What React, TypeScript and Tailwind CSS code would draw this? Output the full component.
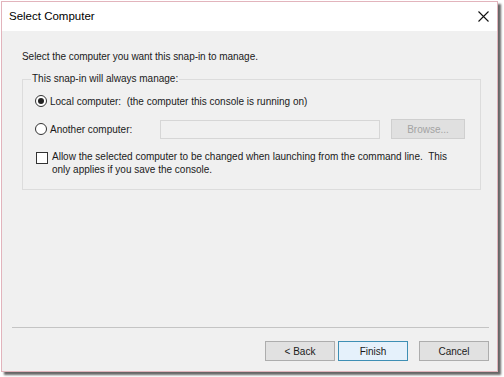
import React from "react";

export default function App() {
  const font = { fontFamily: '"Liberation Sans", Arial, sans-serif' };
  return (
    <div className="w-[504px] h-[377px] bg-white overflow-hidden" style={font}>
      <div className="ml-[1px] mt-[1px] w-[497px] h-[371px] border border-[#e2b4bc] bg-[#f0f0f0] shadow-[3px_3px_2px_rgba(0,0,0,0.6)] flex flex-col text-[10px] text-[#1a1a1a]">
        <div className="h-[29px] bg-white flex items-center justify-between pl-[7px] pr-[6px] shrink-0">
          <span className="text-[11.5px] text-black">Select Computer</span>
          <svg width="11" height="11" viewBox="0 0 11 11" className="mr-[2px]">
            <path d="M0.5 0.5 L10.5 10.5 M10.5 0.5 L0.5 10.5" stroke="#111" strokeWidth="1.1" fill="none" />
          </svg>
        </div>
        <div className="flex-1 flex flex-col">
          <div className="ml-[20px] mt-[19px] leading-[14px] tracking-[-0.05px]">Select the computer you want this snap-in to manage.</div>
          <fieldset className="ml-[20px] mr-[16px] mt-[8px] border border-[#dcdcdc] pb-[13px]">
            <legend className="ml-[8px] px-[1px] leading-[14px]">This snap-in will always manage:</legend>
            <div className="ml-[12px] mt-[7px] h-[16px] flex items-center">
              <span className="w-[12px] h-[12px] rounded-full border border-[#333] bg-white flex items-center justify-center">
                <span className="w-[6px] h-[6px] rounded-full bg-[#222]" />
              </span>
              <span className="ml-[3px] whitespace-pre">Local computer:  (the computer this console is running on)</span>
            </div>
            <div className="ml-[12px] mt-[10px] h-[20px] flex items-center">
              <span className="w-[12px] h-[12px] rounded-full border border-[#333] bg-white" />
              <span className="ml-[3px] w-[110px]">Another computer:</span>
              <div className="w-[220px] h-[19px] border border-[#d6d6d6] bg-[#f0f0f0]" />
              <div className="ml-[11px] w-[74px] h-[20px] border border-[#cfcfcf] bg-[#e0e0e0] flex items-center justify-center text-[#a3a3a3]">
                Browse...
              </div>
            </div>
            <div className="ml-[12px] mt-[11px] flex items-start">
              <span className="mt-[2px] ml-[1px] w-[12px] h-[12px] border border-[#333] bg-white shrink-0" />
              <span className="ml-[4px] leading-[13px] whitespace-pre">
                Allow the selected computer to be changed when launching from the command line.  This
                <br />
                only applies if you save the console.
              </span>
            </div>
          </fieldset>
          <div className="flex-1" />
          <div className="ml-[10px] mr-[8px] border-t border-[#c4c4c4]" />
          <div className="mt-[13px] mb-[10px] mr-[8px] flex justify-end">
            <div className="w-[70px] h-[20px] border border-[#adadad] bg-[#e1e1e1] flex items-center justify-center">&lt; Back</div>
            <div className="ml-[3px] w-[70px] h-[20px] border border-[#3e8fb4] bg-[#e5f1fb] flex items-center justify-center">Finish</div>
            <div className="ml-[11px] w-[70px] h-[20px] border border-[#adadad] bg-[#e1e1e1] flex items-center justify-center">Cancel</div>
          </div>
        </div>
      </div>
    </div>
  );
}
